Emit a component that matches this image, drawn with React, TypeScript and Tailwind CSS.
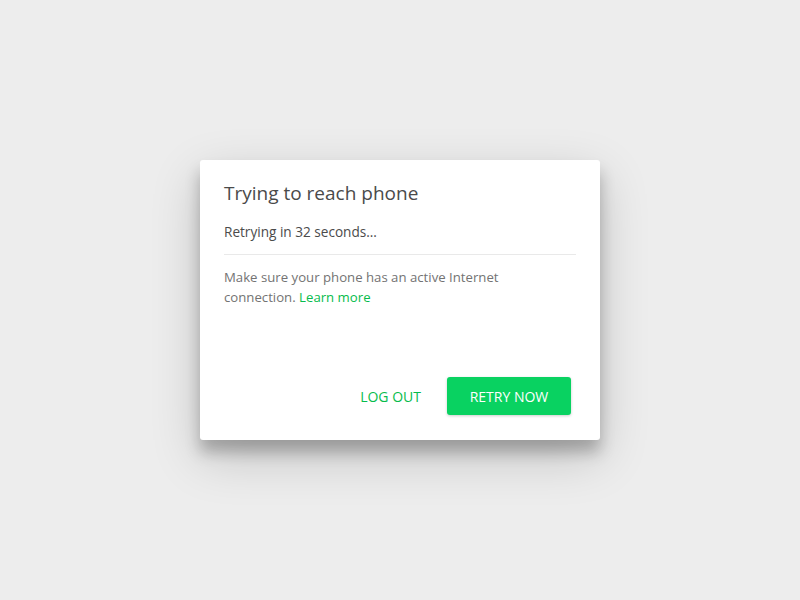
export default function App() {
  return (
    <div
      className="flex min-h-screen items-center justify-center bg-[#ededed]"
      style={{ fontFamily: '"Open Sans", "Noto Sans", sans-serif' }}
    >
      <div className="flex h-[280px] w-[400px] flex-col rounded-[3px] bg-white shadow-[0_17px_50px_0_rgba(0,0,0,0.19),0_12px_15px_0_rgba(0,0,0,0.24)]">
        <div className="flex-1 px-6 pt-[20px]">
          <h1 className="text-[19px] leading-[26px] text-[#4a4a4a]">Trying to reach phone</h1>
          <p className="mt-[16px] text-[13.6px] leading-[20px] text-[#4b4b4b]">Retrying in 32 seconds...</p>
          <div className="mt-[12px] border-t border-[#e9e9e9]" />
          <p className="mt-[12px] w-[300px] text-[13.2px] leading-[20px] text-[#737373]">
            Make sure your phone has an active Internet connection. <a href="#" className="text-[#07bc4c]">Learn more</a>
          </p>
        </div>
        <div className="flex items-center justify-end gap-[8px] pb-[25px] pr-[29px]">
          <button className="h-[38px] rounded-[3px] px-[18px] text-[14px] uppercase text-[#07bc4c]">Log out</button>
          <button className="h-[38px] w-[124px] rounded-[3px] bg-[#09d261] text-[14px] uppercase text-white shadow-[0_1px_3px_rgba(0,0,0,0.2)]">
            Retry now
          </button>
        </div>
      </div>
    </div>
  );
}
